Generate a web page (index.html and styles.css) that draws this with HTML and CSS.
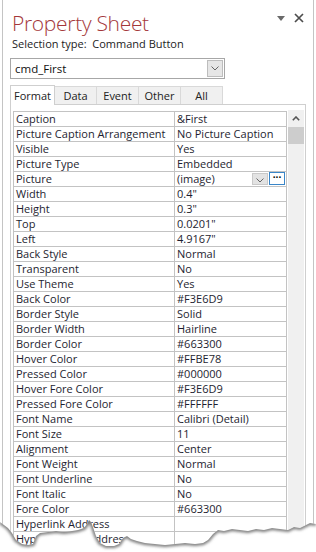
FILE: index.html
```html
<!DOCTYPE html>
<html lang="en">
<head>
    <meta charset="UTF-8">
    <title>Property Sheet</title>
    <link rel="stylesheet" href="styles.css">
</head>
<body>
    <div class="pane">
        <div class="pane-head">
            <h1 class="pane-title">Property Sheet</h1>
            <div class="pane-ctrls">
                <svg width="8" height="5" viewBox="0 0 8 5"><polygon points="0,0 8,0 4,5" fill="#6a6a6a"/></svg>
                <svg width="10" height="10" viewBox="0 0 10 10"><path d="M1 1 L9 9 M9 1 L1 9" stroke="#4d4d4d" stroke-width="1.7"/></svg>
            </div>
        </div>
        <div class="sel-type">Selection type:&nbsp; Command Button</div>

        <div class="combo">
            <span class="combo-text">cmd_First</span>
            <span class="combo-btn">
                <svg width="8" height="5" viewBox="0 0 8 5"><path d="M0.5 0.5 L4 4 L7.5 0.5" stroke="#666" fill="none"/></svg>
            </span>
        </div>

        <div class="tabs">
            <div class="tab active">Format</div>
            <div class="tab">Data</div>
            <div class="tab">Event</div>
            <div class="tab">Other</div>
            <div class="tab">All</div>
        </div>

        <div class="tab-body">
            <table class="props">
                <colgroup><col class="col-name"><col class="col-value"></colgroup>
                <tr><td>Caption</td><td>&amp;First</td></tr>
                <tr><td>Picture Caption Arrangement</td><td>No Picture Caption</td></tr>
                <tr><td>Visible</td><td>Yes</td></tr>
                <tr><td>Picture Type</td><td>Embedded</td></tr>
                <tr><td>Picture</td><td class="picker">(image)
                    <span class="pick-drop"><svg width="8" height="5" viewBox="0 0 8 5"><path d="M0.5 0.5 L4 4 L7.5 0.5" stroke="#666" fill="none"/></svg></span>
                    <span class="pick-build">&middot;&middot;&middot;</span>
                </td></tr>
                <tr><td>Width</td><td>0.4"</td></tr>
                <tr><td>Height</td><td>0.3"</td></tr>
                <tr><td>Top</td><td>0.0201"</td></tr>
                <tr><td>Left</td><td>4.9167"</td></tr>
                <tr><td>Back Style</td><td>Normal</td></tr>
                <tr><td>Transparent</td><td>No</td></tr>
                <tr><td>Use Theme</td><td>Yes</td></tr>
                <tr><td>Back Color</td><td>#F3E6D9</td></tr>
                <tr><td>Border Style</td><td>Solid</td></tr>
                <tr><td>Border Width</td><td>Hairline</td></tr>
                <tr><td>Border Color</td><td>#663300</td></tr>
                <tr><td>Hover Color</td><td>#FFBE78</td></tr>
                <tr><td>Pressed Color</td><td>#000000</td></tr>
                <tr><td>Hover Fore Color</td><td>#F3E6D9</td></tr>
                <tr><td>Pressed Fore Color</td><td>#FFFFFF</td></tr>
                <tr><td>Font Name</td><td>Calibri (Detail)</td></tr>
                <tr><td>Font Size</td><td>11</td></tr>
                <tr><td>Alignment</td><td>Center</td></tr>
                <tr><td>Font Weight</td><td>Normal</td></tr>
                <tr><td>Font Underline</td><td>No</td></tr>
                <tr><td>Font Italic</td><td>No</td></tr>
                <tr><td>Fore Color</td><td>#663300</td></tr>
                <tr><td>Hyperlink Address</td><td></td></tr>
                <tr><td>Hyperlink SubAddress</td><td></td></tr>
            </table>
            <div class="vscroll">
                <div class="vscroll-up">
                    <svg width="8" height="5" viewBox="0 0 8 5"><path d="M0.8 4.2 L4 1 L7.2 4.2" stroke="#555" stroke-width="1.6" fill="none"/></svg>
                </div>
                <div class="vscroll-thumb"></div>
            </div>
        </div>

        <!-- torn paper edge over the bottom -->
        <svg class="tear" width="316" height="42" viewBox="0 0 316 42">
            <defs>
                <clipPath id="below">
                    <path d="M0 12 L4 15 L8 18 L12 23 L16 30 L22 34 L28 35 L33 34 L36 26 L40 23 L48 22 L56 21 L64 22 L72 21 L78 20 L84 18 L87 14 L89 10 L91 12 L93 17 L96 26 L100 33 L106 36 L114 36 L119 34 L123 28 L127 26 L131 29 L137 31 L145 33 L155 34 L165 35 L175 34 L185 33 L195 34 L203 33 L208 30 L213 24 L218 20 L224 21 L232 19 L240 20 L248 21 L256 19 L264 20 L272 18 L280 19 L288 20 L294 17 L300 18 L306 15 L310 13 L316 14 L316 42 L0 42 Z"/>
                </clipPath>
                <filter id="soft" x="-5%" y="-50%" width="110%" height="200%">
                    <feGaussianBlur stdDeviation="1.6"/>
                </filter>
            </defs>
            <path fill="#fff" d="M0 12 L4 15 L8 18 L12 23 L16 30 L22 34 L28 35 L33 34 L36 26 L40 23 L48 22 L56 21 L64 22 L72 21 L78 20 L84 18 L87 14 L89 10 L91 12 L93 17 L96 26 L100 33 L106 36 L114 36 L119 34 L123 28 L127 26 L131 29 L137 31 L145 33 L155 34 L165 35 L175 34 L185 33 L195 34 L203 33 L208 30 L213 24 L218 20 L224 21 L232 19 L240 20 L248 21 L256 19 L264 20 L272 18 L280 19 L288 20 L294 17 L300 18 L306 15 L310 13 L316 14 L316 42 L0 42 Z"/>
            <g clip-path="url(#below)">
                <path fill="none" stroke="#7a7a7a" stroke-width="4" filter="url(#soft)" d="M0 12 L4 15 L8 18 L12 23 L16 30 L22 34 L28 35 L33 34 L36 26 L40 23 L48 22 L56 21 L64 22 L72 21 L78 20 L84 18 L87 14 L89 10 L91 12 L93 17 L96 26 L100 33 L106 36 L114 36 L119 34 L123 28 L127 26 L131 29 L137 31 L145 33 L155 34 L165 35 L175 34 L185 33 L195 34 L203 33 L208 30 L213 24 L218 20 L224 21 L232 19 L240 20 L248 21 L256 19 L264 20 L272 18 L280 19 L288 20 L294 17 L300 18 L306 15 L310 13 L316 14"/>
            </g>
        </svg>
    </div>
</body>
</html>
```

FILE: styles.css
```css
body {
    margin: 0;
    background: #fff;
    font-family: 'Open Sans', 'Noto Sans', sans-serif;
    font-size: 11px;
    color: #1e1e2a;
    overflow: hidden;
}

.pane {
    position: relative;
    width: 312px;
    height: 552px;
    margin: 0 2px;
    padding-left: 7px;
    box-sizing: border-box;
    border-left: 1px solid #c4c4c4;
    border-right: 1px solid #c4c4c4;
}

.pane-head {
    display: flex;
    justify-content: space-between;
    align-items: flex-start;
    padding-top: 10px;
}

.pane-title {
    margin: 0 0 0 2px;
    font-size: 21px;
    letter-spacing: -0.3px;
    font-weight: 300;
    line-height: 26px;
    color: #a4373a;
}

.pane-ctrls {
    display: flex;
    align-items: center;
    gap: 9px;
    margin: 3px 9px 0 0;
}

.sel-type {
    margin-top: 1px;
    padding-left: 2px;
    line-height: 14px;
    color: #222;
}

/* combo box */
.combo {
    display: flex;
    align-items: center;
    justify-content: space-between;
    width: 215px;
    height: 21px;
    margin-top: 7px;
    box-sizing: border-box;
    border: 1px solid #a7a7a7;
    padding: 0 1px 0 4px;
}

.combo-text {
    font-size: 11.5px;
    color: #111;
}

.combo-btn {
    display: flex;
    align-items: center;
    justify-content: center;
    width: 16px;
    height: 17px;
    background: #e6e6e6;
    border: 1px solid #bdbdbd;
    box-sizing: border-box;
}

/* tabs */
.tabs {
    display: flex;
    align-items: flex-end;
    margin-top: 5px;
    height: 20px;
}

.tab {
    height: 18px;
    line-height: 18px;
    box-sizing: border-box;
    width: 42px;
    text-align: center;
    background: #f0f0f0;
    border: 1px solid #d9d9d9;
    border-bottom: none;
    border-left: none;
    color: #222;
}

.tab.active {
    width: 45px;
    height: 20px;
    line-height: 19px;
    background: #fff;
    border: 1px solid #cfcfcf;
    border-bottom: none;
    margin-bottom: -1px;
    position: relative;
    z-index: 1;
}

.tab-body {
    display: flex;
    align-items: flex-start;
    gap: 1px;
    width: 296px;
    height: 460px;
    box-sizing: border-box;
    border: 1px solid #cfcfcf;
    border-bottom: none;
    padding: 6px 0 0 2px;
}

/* property grid */
.props {
    border-collapse: collapse;
    table-layout: fixed;
    width: 274px;
}

.col-name { width: 161px; }

.props td {
    height: 14px;
    padding: 0 0 0 2px;
    border: 1px solid #c3c3c3;
    line-height: 14px;
    white-space: nowrap;
    overflow: hidden;
    color: #1e1e30;
}

.picker {
    position: relative;
}

.pick-drop {
    position: absolute;
    top: 1px;
    right: 18px;
    width: 16px;
    height: 12px;
    background: #e3e3e3;
    border: 1px solid #c9c9c9;
    box-sizing: border-box;
    display: flex;
    align-items: flex-end;
    justify-content: center;
    padding-bottom: 1px;
}

.pick-build {
    position: absolute;
    top: 0;
    right: 1px;
    width: 16px;
    height: 13px;
    box-sizing: border-box;
    border: 1px solid #3a86c8;
    background: #fff;
    font-weight: bold;
    font-size: 10px;
    line-height: 9px;
    text-align: center;
    color: #000;
}

/* scrollbar */
.vscroll {
    width: 16px;
    height: 100%;
    background: #f0f0f0;
    margin-top: -1px;
}

.vscroll-up {
    display: flex;
    align-items: center;
    justify-content: center;
    height: 17px;
}

.vscroll-thumb {
    height: 17px;
    background: #cdcdcd;
}

.tear {
    position: absolute;
    left: -3px;
    bottom: 0;
}
```
